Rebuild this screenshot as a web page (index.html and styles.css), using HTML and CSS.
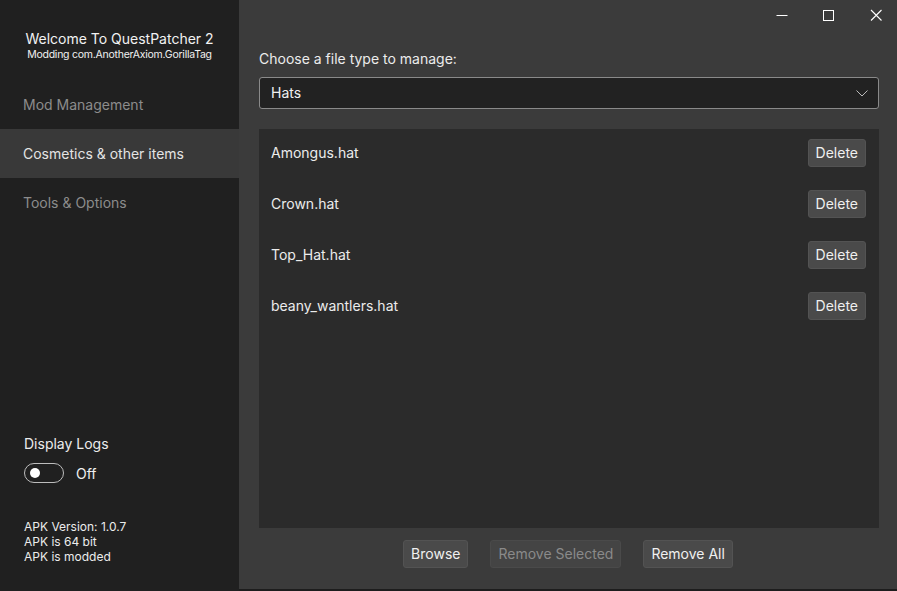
FILE: index.html
```html
<!DOCTYPE html>
<html>
<head>
<meta charset="utf-8">
<link rel="stylesheet" href="styles.css">
</head>
<body>
<div class="app">
  <aside class="sidebar">
    <div class="brand">
      <div class="brand-title">Welcome To QuestPatcher 2</div>
      <div class="brand-sub">Modding com.AnotherAxiom.GorillaTag</div>
    </div>
    <nav class="nav">
      <div class="nav-item">Mod Management</div>
      <div class="nav-item active">Cosmetics &amp; other items</div>
      <div class="nav-item">Tools &amp; Options</div>
    </nav>
    <div class="logs">
      <div class="logs-title">Display Logs</div>
      <div class="toggle-row">
        <span class="toggle"><span class="knob"></span></span>
        <span class="toggle-label">Off</span>
      </div>
    </div>
    <div class="apk">
      <div>APK Version: 1.0.7</div>
      <div>APK is 64 bit</div>
      <div>APK is modded</div>
    </div>
  </aside>
  <main class="main">
    <div class="titlebar">
      <span class="win-btn"><svg width="12" height="12" viewBox="0 0 12 12"><line x1="0.5" y1="6.5" x2="11.5" y2="6.5" stroke="#fff" stroke-width="1"/></svg></span>
      <span class="win-btn"><svg width="12" height="12" viewBox="0 0 12 12"><rect x="1.5" y="1.5" width="10" height="10" fill="none" stroke="#fff" stroke-width="1"/></svg></span>
      <span class="win-btn close"><svg width="12" height="12" viewBox="0 0 12 12"><path d="M1 1 L11.5 11.5 M11.5 1 L1 11.5" stroke="#fff" stroke-width="1.1"/></svg></span>
    </div>
    <div class="content">
      <div class="label">Choose a file type to manage:</div>
      <div class="select">
        <span>Hats</span>
        <svg class="chev" width="12" height="7" viewBox="0 0 12 7"><path d="M0.5 0.5 L6 6 L11.5 0.5" fill="none" stroke="#bbb" stroke-width="1"/></svg>
      </div>
      <div class="list">
        <div class="row"><span>Amongus.hat</span><button class="btn">Delete</button></div>
        <div class="row"><span>Crown.hat</span><button class="btn">Delete</button></div>
        <div class="row"><span>Top_Hat.hat</span><button class="btn">Delete</button></div>
        <div class="row"><span>beany_wantlers.hat</span><button class="btn">Delete</button></div>
      </div>
      <div class="actions">
        <button class="btn">Browse</button>
        <button class="btn disabled">Remove Selected</button>
        <button class="btn">Remove All</button>
      </div>
    </div>
  </main>
</div>
</body>
</html>
```
FILE: styles.css
```css
* { box-sizing: border-box; }
html, body { margin: 0; padding: 0; }
body {
  width: 897px;
  height: 591px;
  background: #1d1d1d;
  font-family: "Inter", "Noto Sans", sans-serif;
  color: #e6e6e6;
  overflow: hidden;
}
.app {
  display: flex;
  height: 591px;
}
.sidebar {
  width: 239px;
  background: #202020;
  display: flex;
  flex-direction: column;
  flex-shrink: 0;
}
.brand {
  padding-top: 30px;
  text-align: center;
  height: 80px;
}
.brand-title {
  font-size: 14px;
  line-height: 18px;
  color: #f2f2f2;
  letter-spacing: 0;
}
.brand-sub {
  font-size: 10.5px;
  line-height: 13px;
  color: #f0f0f0;
  letter-spacing: -0.25px;
}
.nav { display: flex; flex-direction: column; }
.nav-item {
  height: 49px;
  display: flex;
  align-items: center;
  padding-left: 23px;
  font-size: 14px;
  color: #8c8c8c;
}
.nav-item.active {
  background: #393939;
  color: #e4e4e4;
}
.logs {
  margin-top: auto;
  padding-left: 24px;
}
.logs-title {
  font-size: 14px;
  line-height: 18px;
  color: #ececec;
}
.toggle-row {
  display: flex;
  align-items: center;
  margin-top: 10px;
  gap: 12px;
}
.toggle {
  width: 40px;
  height: 20px;
  border: 1px solid #bdbdbd;
  border-radius: 10px;
  display: flex;
  align-items: center;
  padding-left: 5px;
}
.knob {
  width: 10px;
  height: 10px;
  border-radius: 50%;
  background: #fff;
}
.toggle-label { font-size: 14px; color: #f0f0f0; }
.apk {
  padding: 36px 0 27px 24px;
  font-size: 12px;
  line-height: 15px;
  color: #ececec;
}
.main {
  flex: 1;
  background: #3b3b3b;
  height: 589px;
  display: flex;
  flex-direction: column;
}
.titlebar {
  height: 32px;
  display: flex;
  justify-content: flex-end;
}
.win-btn {
  width: 46px;
  height: 32px;
  display: flex;
  align-items: center;
  justify-content: center;
  padding-bottom: 2px;
}
.win-btn.close { padding-left: 4px; }
.content {
  flex: 1;
  display: flex;
  flex-direction: column;
  padding: 18px 18px 21px 20px;
}
.label {
  font-size: 14px;
  line-height: 18px;
  color: #ececec;
}
.select {
  margin-top: 9px;
  height: 32px;
  background: #222222;
  border: 1px solid #8a8a8a;
  border-radius: 3px;
  display: flex;
  align-items: center;
  justify-content: space-between;
  padding: 0 10px 2px 11px;
  font-size: 14px;
  color: #f0f0f0;
}
.chev { margin-top: 2px; }
.list {
  margin-top: 20px;
  flex: 1;
  background: #2b2b2b;
}
.row {
  display: flex;
  align-items: center;
  justify-content: space-between;
  padding: 10px 13px 13px 12px;
  font-size: 14px;
  color: #ececec;
}
.row > span { margin-top: -1px; }
.btn {
  font-family: inherit;
  font-size: 14px;
  color: #f0f0f0;
  background: #4a4a4a;
  border: 1px solid #535353;
  border-radius: 3px;
  height: 28px;
  padding: 0 7px;
  line-height: 26px;
}
.btn.disabled {
  background: #444444;
  color: #8a8a8a;
  border-color: #4a4a4a;
}
.actions {
  margin-top: 12px;
  display: flex;
  justify-content: center;
  gap: 22px;
  padding-right: 2px;
}
```
